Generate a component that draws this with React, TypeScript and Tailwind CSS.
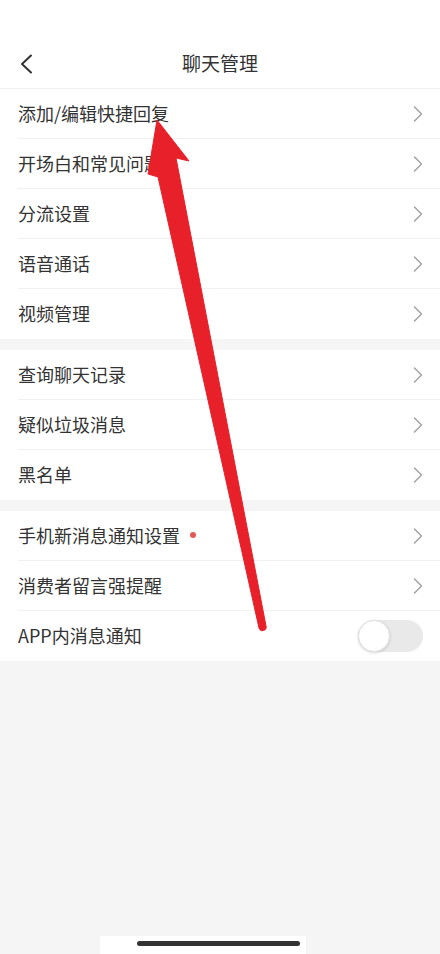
import React from "react";

type Row = { label: string; dot?: boolean; toggle?: boolean };

const groups: Row[][] = [
  [
    { label: "添加/编辑快捷回复" },
    { label: "开场白和常见问题" },
    { label: "分流设置" },
    { label: "语音通话" },
    { label: "视频管理" },
  ],
  [{ label: "查询聊天记录" }, { label: "疑似垃圾消息" }, { label: "黑名单" }],
  [
    { label: "手机新消息通知设置", dot: true },
    { label: "消费者留言强提醒" },
    { label: "APP内消息通知", toggle: true },
  ],
];

function Chevron() {
  return (
    <svg width="10" height="16" viewBox="0 0 10 16" fill="none">
      <polyline points="1.5,1 8.5,8 1.5,15" stroke="#a3a3a3" strokeWidth="1.5" strokeLinecap="round" strokeLinejoin="round" />
    </svg>
  );
}

export default function App() {
  return (
    <div
      className="relative w-[440px] h-[954px] bg-[#f5f5f5] overflow-hidden"
      style={{ fontFamily: '"Noto Sans CJK SC", "Noto Sans", sans-serif' }}
    >
      <div className="bg-white pt-[40px] border-b border-[#efefef]">
        <div className="relative h-[48px] flex items-center justify-center">
          <div className="absolute left-[19px] top-[14px]">
            <svg width="14" height="20" viewBox="0 0 14 20" fill="none">
              <polyline points="12,1.5 3,10 12,18.5" stroke="#333" strokeWidth="2" strokeLinecap="round" strokeLinejoin="round" />
            </svg>
          </div>
          <span className="text-[19px] text-[#333] leading-none mt-[-3px]">聊天管理</span>
        </div>
      </div>

      <div className="flex flex-col gap-[11px]">
        {groups.map((g, gi) => (
          <div key={gi} className="bg-white flex flex-col">
            {g.map((r, ri) => (
              <div key={ri} className="h-[50px] flex pl-[18px]">
                <div
                  className={
                    "flex-1 flex items-center justify-between pr-[17px] " +
                    (ri < g.length - 1 ? "border-b border-[#f0f0f0]" : "")
                  }
                >
                  <div className="flex items-center mt-[-2px]">
                    <span className="text-[18px] text-[#333] leading-none">{r.label}</span>
                    {r.dot && <span className="ml-[10px] w-[6px] h-[6px] rounded-full bg-[#e05a5a]" />}
                  </div>
                  {r.toggle ? (
                    <div className="w-[65px] h-[32px] rounded-full bg-[#e9e9e9] flex items-center">
                      <div className="w-[32px] h-[32px] rounded-full bg-white border border-[#e2e2e2] shadow-[0_1px_3px_rgba(0,0,0,0.15)]" />
                    </div>
                  ) : (
                    <Chevron />
                  )}
                </div>
              </div>
            ))}
          </div>
        ))}
      </div>

      <div className="absolute left-[100px] bottom-0 w-[206px] h-[18px] bg-white" />
      <div className="absolute left-[137px] top-[941px] w-[163px] h-[5px] rounded-full bg-[#333]" />

      <svg className="absolute left-0 top-0 pointer-events-none" width="440" height="954" viewBox="0 0 440 954">
        <path
          d="M157,120 L189,161 L176,158 L266,626 A3.6,3.6 0 0 1 259,628 L158,177 L148,174 Z"
          fill="#e8202a"
          stroke="#e8202a"
          strokeWidth="1"
          strokeLinejoin="round"
        />
      </svg>
    </div>
  );
}
